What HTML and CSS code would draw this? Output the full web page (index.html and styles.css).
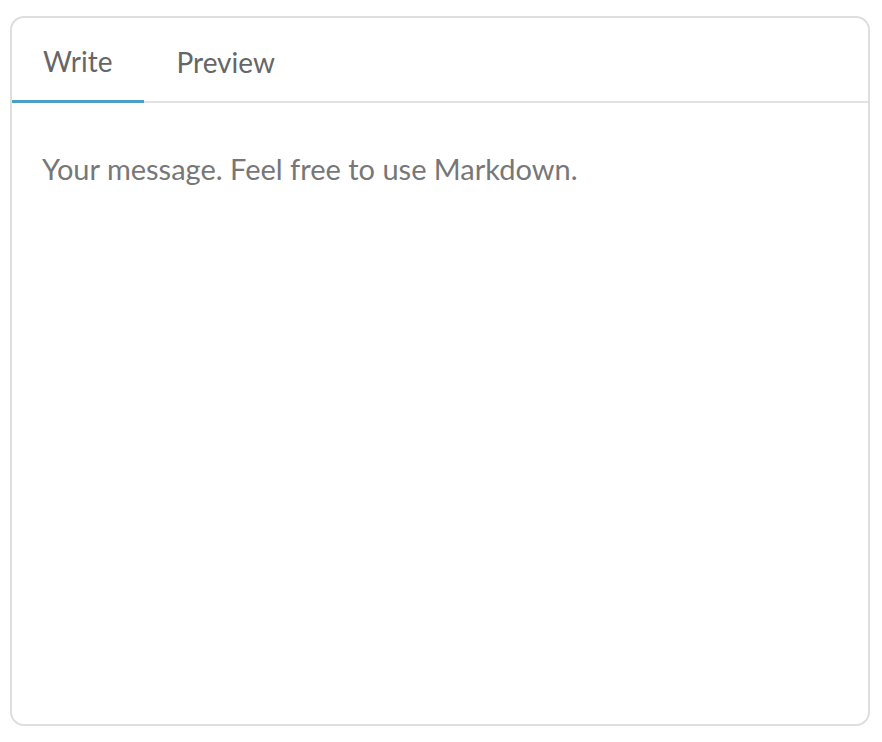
FILE: index.html
```html
<!DOCTYPE html>
<html>
<head>
<meta charset="utf-8">
<link rel="stylesheet" href="styles.css">
</head>
<body>
<div class="card">
  <div class="tabs">
    <div class="tab active">Write</div>
    <div class="tab">Preview</div>
  </div>
  <div class="body">
    <div class="placeholder">Your message. Feel free to use Markdown.</div>
  </div>
</div>
</body>
</html>
```
FILE: styles.css
```css
html, body {
  margin: 0;
  padding: 0;
  background: #ffffff;
}
body {
  padding: 16px 12px 0 10px;
  font-family: Lato, "Open Sans", sans-serif;
}
.card {
  width: 856px;
  height: 706px;
  border: 2px solid #dedede;
  border-radius: 14px;
  display: flex;
  flex-direction: column;
  overflow: hidden;
}
.tabs {
  display: flex;
  height: 83px;
  border-bottom: 2px solid #e2e2e2;
}
.tab {
  padding: 4px 32px 0 32px;
  display: flex;
  align-items: center;
  font-size: 28px;
  color: #666666;
  box-sizing: border-box;
}
.tab.active {
  padding-left: 31px;
  padding-right: 32px;
  border-bottom: 3px solid #4aa0c4;
  margin-bottom: -2px;
}
.body {
  flex: 1;
  padding: 46px 30px;
}
.placeholder {
  font-size: 29px;
  color: #777777;
  line-height: 40px;
}
```
